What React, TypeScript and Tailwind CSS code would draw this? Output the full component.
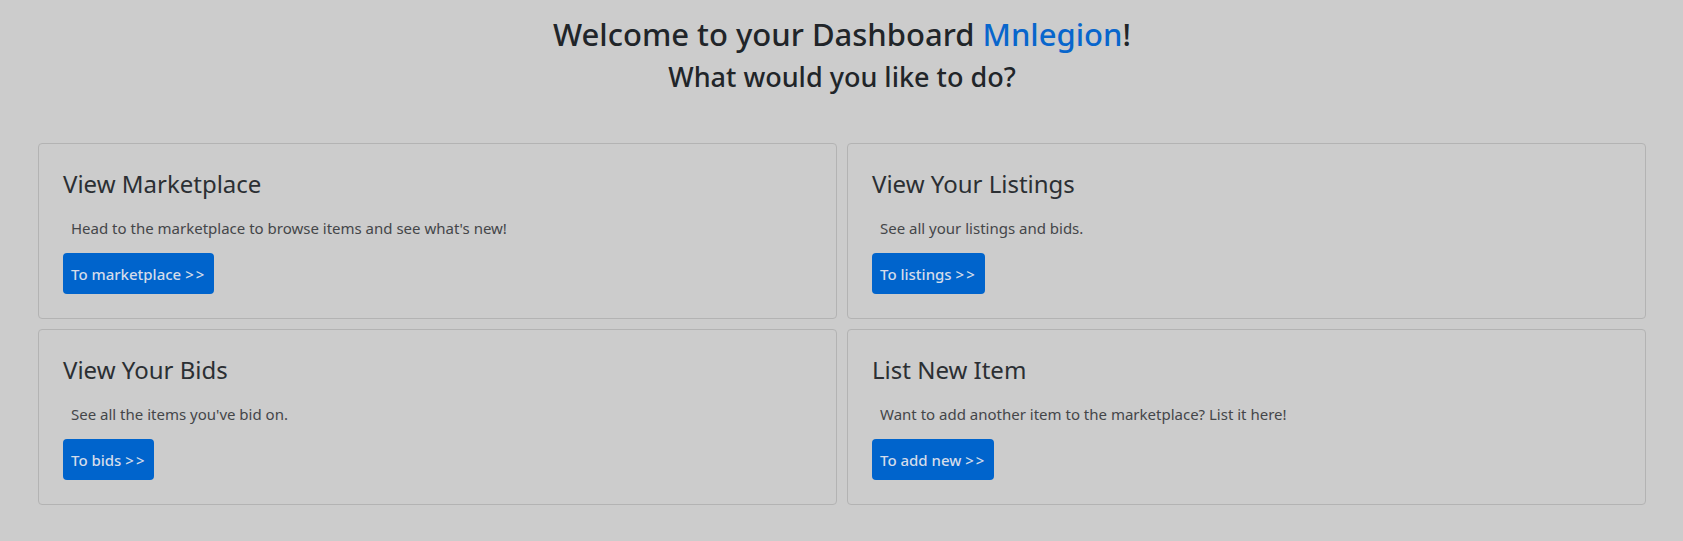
const cards = [
  {
    title: 'View Marketplace',
    text: "Head to the marketplace to browse items and see what's new!",
    button: 'To marketplace',
  },
  {
    title: 'View Your Listings',
    text: 'See all your listings and bids.',
    button: 'To listings',
  },
  {
    title: 'View Your Bids',
    text: "See all the items you've bid on.",
    button: 'To bids',
  },
  {
    title: 'List New Item',
    text: 'Want to add another item to the marketplace? List it here!',
    button: 'To add new',
  },
];

function ActionCard({ title, text, button }: { title: string; text: string; button: string }) {
  return (
    <div className="flex h-[176px] flex-col rounded border border-[#b3b3b3] px-6 pt-[26px]">
      <h4 className="text-[24px] leading-[1.2] text-[#2b2f33]">{title}</h4>
      <p className="mt-[18px] pl-[8px] text-[15px] leading-6 text-[#444649]">{text}</p>
      <div className="mt-[13px]">
        <button className="h-[41px] rounded bg-[#0064cc] px-2 text-[15px] font-medium text-[#d4dcea]">
          {button} <span className="tracking-[2px]">&gt;&gt;</span>
        </button>
      </div>
    </div>
  );
}

export default function App() {
  return (
    <div className="min-h-[541px] bg-[#cccccc] pl-[38px] pr-[37px] pt-4 font-['Noto_Sans',sans-serif] text-[#212529]">
      <div className="text-center">
        <h2 className="text-[31px] font-medium leading-[1.2]">
          Welcome to your Dashboard <span className="text-[#0866cc]">Mnlegion</span>!
        </h2>
        <h3 className="mt-2 text-[27px] font-medium leading-[1.2]">What would you like to do?</h3>
      </div>
      <div className="mt-[49px] grid grid-cols-2 gap-[10px]">
        {cards.map((c) => (
          <ActionCard key={c.title} {...c} />
        ))}
      </div>
    </div>
  );
}
